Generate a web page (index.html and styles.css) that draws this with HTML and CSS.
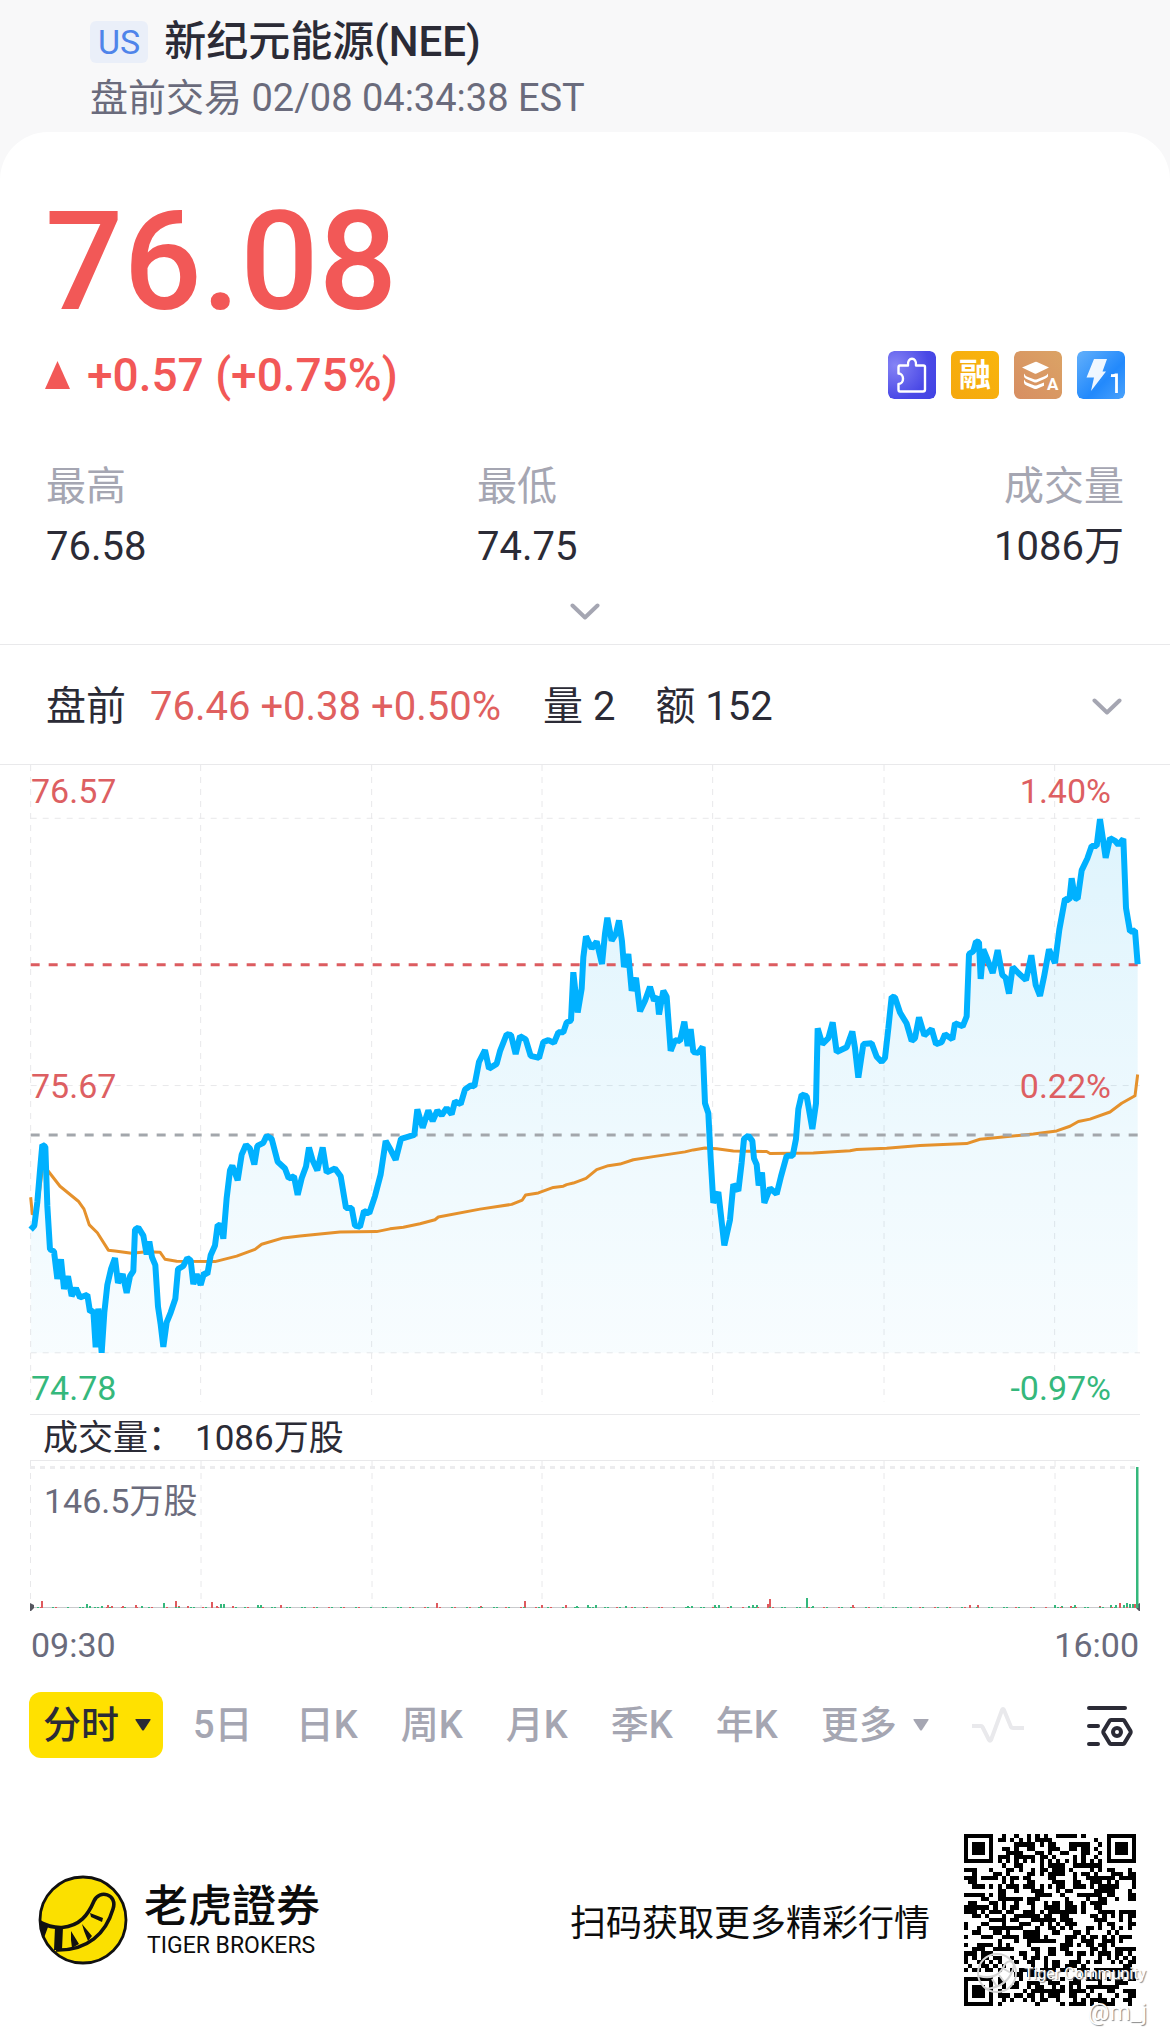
FILE: index.html
```html
<!DOCTYPE html>
<html lang="zh-CN">
<head>
<meta charset="utf-8">
<meta name="viewport" content="width=device-width, initial-scale=1">
<title>新纪元能源(NEE)</title>
<link rel="stylesheet" href="styles.css">
</head>
<body>
<header class="header">
  <div class="title-row">
    <span class="market">US</span>
    <h1 class="title">新纪元能源(NEE)</h1>
  </div>
  <p class="session">盘前交易 02/08 04:34:38 EST</p>
</header>

<main class="card">
  <section class="quote">
    <div class="price">76.08</div>
    <div class="change-row">
      <div class="change">
        <svg class="up" viewBox="0 0 25 28" aria-hidden="true"><path d="M12.500 0 25 28H0z"/></svg>
        <span>+0.57 (+0.75%)</span>
      </div>
      <div class="badges">
        <svg class="badge" viewBox="0 0 48 48" aria-hidden="true">
          <defs><radialGradient id="g1" cx=".15" cy=".3" r="1"><stop offset="0" stop-color="#8583f5"/><stop offset=".7" stop-color="#4a49e6"/><stop offset="1" stop-color="#4344e4"/></radialGradient></defs>
          <rect width="48" height="48" rx="6" fill="url(#g1)"/>
          <path d="M12 14.500h8c-1-9 9-9 8 0h7.500q1.500 0 1.500 1.500v22.500q0 2-2 2H12q-1.500 0-1.500-2v-5.500c6 0 6-10.500 0-10.500v-6q0-2 1.500-2z" fill="none" stroke="#fff" stroke-width="2.400" stroke-linejoin="round"/>
        </svg>
        <span class="badge badge-margin">融</span>
        <svg class="badge" viewBox="0 0 48 48" aria-hidden="true">
          <defs><linearGradient id="g3" x1="0" y1="1" x2="1" y2="0"><stop offset="0" stop-color="#d78e62"/><stop offset="1" stop-color="#dba365"/></linearGradient></defs>
          <rect width="48" height="48" rx="6" fill="url(#g3)"/>
          <path d="M8 16.500 21 11q1-.4 2 0l12 5.500-12.500 6q-1 .4-2 0z" fill="#fff"/>
          <path d="M10 22.500q1 2.500 4 3.500l6 2.300q1.500.5 3 0l7-2.800q3-1 4-3v3q-1 1.500-3 2.300l-8 3.400q-1.500.6-3 0l-7-3q-3-1.200-3-3zM10 28.500q1 2.500 4 3.500l6 2.300q1.500.5 3 0l7-2.800v3.300l-7 3q-1.500.6-3 0l-7-3q-3-1.200-3-3z" fill="#fff"/>
          <text x="33" y="39" class="badge-letter">A</text>
        </svg>
        <svg class="badge" viewBox="0 0 48 48" aria-hidden="true">
          <defs><linearGradient id="g4" x1="0" y1="0" x2="1" y2="1"><stop offset="0" stop-color="#63b0fb"/><stop offset=".6" stop-color="#2289fc"/><stop offset="1" stop-color="#4ba2fb"/></linearGradient></defs>
          <rect width="48" height="48" rx="6" fill="url(#g4)"/>
          <path d="M17 8h13l-4.500 12.500H29L14 40l3-13.500H9.500z" fill="#fff" fill-opacity=".92"/>
          <path d="M34 24.500q3 .5 4.500-.5h1v18" fill="none" stroke="#fff" stroke-width="2.800"/>
        </svg>
      </div>
    </div>
  </section>

  <dl class="stats">
    <div class="stat"><dt>最高</dt><dd>76.58</dd></div>
    <div class="stat"><dt>最低</dt><dd>74.75</dd></div>
    <div class="stat stat-end"><dt>成交量</dt><dd>1086万</dd></div>
  </dl>
  <button class="expand" type="button" aria-label="展开">
    <svg class="chevron" viewBox="0 0 30 18" aria-hidden="true"><path d="M2.500 2.500 15 14.500 27.500 2.500"/></svg>
  </button>

  <section class="premarket">
    <span>盘前</span>
    <span class="premarket-price">76.46 +0.38 +0.50%</span>
    <span class="premarket-volume">量 2</span>
    <span>额 152</span>
    <button class="more" type="button" aria-label="展开盘前">
      <svg class="chevron" viewBox="0 0 30 18" aria-hidden="true"><path d="M2.500 2.500 15 14.500 27.500 2.500"/></svg>
    </button>
  </section>

  <section class="price-chart">
    <svg class="plot" viewBox="0 13 3510 1644" preserveAspectRatio="none" aria-hidden="true">
      <defs><linearGradient id="area" gradientUnits="userSpaceOnUse" x1="0" y1="150" x2="0" y2="1502"><stop offset="0" stop-color="#00a8ee" stop-opacity=".13"/><stop offset=".45" stop-color="#00a8ee" stop-opacity=".08"/><stop offset="1" stop-color="#00a8ee" stop-opacity=".03"/></linearGradient></defs>
      <path class="grid" d="M92 13V1625M602 13V1625M1115 13V1625M1626 13V1625M2138 13V1625M2652 13V1625M3164 13V1625"/>
      <path class="grid" d="M92 148H3420M92 825H3420M92 1502H3420"/>
      <path id="fill" fill="url(#area)" d=""/>
      <path class="average" d="M92 1108 97 1150 110 1150 128 1030 145 1042 180 1080 235 1118 252 1138 268 1178 292 1198 325 1242 345 1244 395 1250 440 1246 480 1247 495 1265 530 1270 645 1271 710 1257 765 1240 785 1227 850 1211 900 1206 1020 1196 1130 1195 1170 1188 1210 1184 1260 1175 1305 1165 1315 1158 1440 1138 1535 1126 1567 1115 1577 1102 1615 1097 1660 1083 1690 1080 1700 1076 1720 1072 1758 1060 1790 1038 1825 1028 1860 1024 1900 1013 1960 1005 2055 993 2080 988 2115 983 2150 985 2200 991 2300 992 2310 997 2440 996 2550 990 2570 987 2660 984 2760 977 2900 972 2940 961 3100 948 3170 940 3210 928 3235 916 3270 910 3330 892 3365 870 3405 851 3413 797"/>
      <path class="reference-close" d="M92 950H3413"/>
      <path class="reference-last" d="M92 519H3413"/>
      <path id="line" class="line" d="M92 1190 103 1180 112 1120 120 1040 127 975 136 980 142 1130 150 1240 162 1245 172 1315 183 1265 192 1340 204 1308 215 1358 228 1338 240 1362 262 1355 270 1398 280 1395 287 1488 295 1390 305 1502 313 1400 322 1330 333 1290 345 1262 354 1325 368 1303 380 1350 390 1308 400 1295 405 1190 415 1185 430 1205 440 1253 448 1220 456 1260 466 1280 474 1385 482 1430 490 1487 500 1425 512 1400 526 1365 534 1290 550 1282 562 1262 572 1268 580 1328 590 1303 602 1330 612 1300 622 1303 632 1255 645 1230 653 1178 663 1180 670 1213 680 1110 690 1040 697 1028 713 1065 725 1000 738 975 750 985 763 1025 772 978 790 970 800 952 815 960 833 1018 855 1035 866 1060 882 1055 893 1102 905 1060 918 1030 927 982 938 1015 952 1040 968 982 980 1045 1005 1035 1022 1055 1038 1135 1055 1135 1065 1180 1080 1183 1092 1143 1108 1148 1125 1105 1142 1050 1157 965 1170 985 1187 1013 1203 960 1243 950 1252 885 1268 932 1285 888 1298 915 1312 888 1325 900 1340 882 1355 898 1365 865 1382 872 1395 835 1412 825 1423 827 1437 765 1455 735 1467 782 1490 770 1500 738 1520 695 1533 697 1547 745 1560 700 1577 708 1592 750 1617 755 1630 715 1645 710 1662 717 1675 690 1690 690 1700 665 1713 660 1720 538 1733 640 1745 580 1750 500 1758 447 1775 478 1790 460 1806 517 1815 440 1822 400 1835 458 1848 440 1857 407 1866 460 1872 525 1885 492 1895 585 1908 552 1920 637 1935 610 1950 575 1962 610 1972 600 1977 645 1990 585 2000 600 2012 737 2025 710 2040 712 2053 663 2063 725 2072 682 2080 740 2095 742 2108 727 2115 870 2125 895 2132 1010 2140 1122 2155 1095 2173 1230 2190 1165 2200 1075 2215 1092 2225 1020 2232 960 2245 952 2257 965 2262 1010 2270 1025 2276 1078 2286 1045 2293 1122 2310 1085 2330 1100 2343 1055 2360 1003 2378 1003 2388 960 2395 885 2405 848 2420 852 2437 935 2448 870 2453 680 2467 720 2485 705 2498 665 2510 740 2540 728 2557 688 2565 730 2575 805 2590 720 2615 718 2630 752 2645 765 2655 755 2665 680 2675 600 2685 602 2700 640 2720 668 2735 712 2745 705 2757 652 2773 698 2795 682 2808 720 2825 715 2835 695 2857 708 2865 667 2888 675 2900 650 2907 492 2920 485 2928 460 2937 462 2942 555 2950 480 2962 505 2978 540 2993 482 3007 545 3017 552 3027 592 3038 525 3055 540 3078 558 3094 495 3107 570 3120 598 3132 550 3147 480 3165 515 3178 430 3195 352 3208 355 3215 300 3225 350 3233 352 3245 280 3262 250 3275 218 3290 218 3300 150 3307 190 3317 248 3330 198 3345 205 3355 215 3370 200 3378 375 3390 435 3405 432 3413 518"/>
    </svg>
    <div class="axis axis-top"><span>76.57</span><span>1.40%</span></div>
    <div class="axis axis-middle"><span>75.67</span><span>0.22%</span></div>
    <div class="axis axis-bottom"><span>74.78</span><span>-0.97%</span></div>
  </section>

  <section class="volume">
    <h2 class="volume-title"><span>成交量：</span><span>1086万股</span></h2>
    <div class="volume-chart">
      <svg class="plot" viewBox="0 0 1170 150" preserveAspectRatio="none" aria-hidden="true">
        <path class="grid" d="M30.500 0V146M201 0V146M372 0V146M542 0V146M713 0V146M884 0V146M1055 0V146"/>
        <path class="ceiling" d="M30 6.500H1140"/>
        <path class="base" d="M30 146.500H1140"/>
        <g id="bars"></g>
        <path d="M30 142l4 2v3l-4 4zM1140 142l-4 2v3l4 4z" fill="#55565f"/>
        <path class="bar-down" d="M1136 6h2.500v141H1136z"/>
      </svg>
      <span class="volume-max">146.5万股</span>
    </div>
    <div class="times"><span>09:30</span><span>16:00</span></div>
  </section>

  <nav class="tabs">
    <button class="tab tab-active" type="button">分时 <svg class="caret" viewBox="0 0 16 12" aria-hidden="true"><path d="M1 0h14q1 0 .5 1L9 11q-1 1-2 0L.5 1Q0 0 1 0z"/></svg></button>
    <button class="tab" type="button">5日</button>
    <button class="tab" type="button">日K</button>
    <button class="tab" type="button">周K</button>
    <button class="tab" type="button">月K</button>
    <button class="tab" type="button">季K</button>
    <button class="tab" type="button">年K</button>
    <button class="tab" type="button">更多 <svg class="caret" viewBox="0 0 16 12" aria-hidden="true"><path d="M1 0h14q1 0 .5 1L9 11q-1 1-2 0L.5 1Q0 0 1 0z"/></svg></button>
    <button class="tab pulse" type="button" aria-label="走势"><svg viewBox="0 0 52 36" aria-hidden="true"><path d="M0 19h9q1 0 1.500 1l6.500 13q1 1.500 2 0L30 3q1-2 2 0l7 17q.5 1 2 1h11"/></svg></button>
    <button class="tab settings" type="button" aria-label="设置"><svg viewBox="0 0 48 44" aria-hidden="true"><path d="M3 5h36M3 23h9M3 41h9"/><path d="M25 17h12q1 0 1.500 1l6 10q.5 1 0 2l-6 10q-.5 1-1.500 1H25q-1 0-1.500-1l-6-10q-.5-1 0-2l6-10q.5-1 1.500-1z"/><circle cx="31" cy="29" r="4"/></svg></button>
  </nav>
</main>

<footer class="footer">
  <svg class="logo" viewBox="0 0 90 90" aria-hidden="true">
    <defs><clipPath id="disc"><circle cx="45" cy="45" r="43"/></clipPath></defs>
    <circle cx="45" cy="45" r="43.500" fill="#fbe000"/>
    <g clip-path="url(#disc)" fill="none" stroke="#111" stroke-linejoin="round">
      <path d="M0 46Q12 53 24 52.500C42 51 50 40 56 26C61 14 80 19 75 34C68 58 50 76 18 75" stroke-width="3.600"/>
      <path d="M0 47l10 5-4 11zM17 52l8 0-1 23h-8zM33 56l8 13-7 4-1-8zM44 49l10 12-4 5-4-10zM52 38l13 5-1 4-11-5z" fill="#111" stroke="none"/>
    </g>
    <circle cx="45" cy="45" r="43" fill="none" stroke="#111" stroke-width="2.800"/>
  </svg>
  <div class="brand">
    <span class="brand-name">老虎證券</span>
    <span class="brand-latin">TIGER BROKERS</span>
  </div>
  <p class="scan">扫码获取更多精彩行情</p>
  <div class="qr">
    <svg viewBox="0 0 41 41" shape-rendering="crispEdges" role="img" aria-label="二维码"><path id="modules" d=""/></svg>
    <div class="watermark">
      <svg class="watermark-logo" viewBox="0 0 42 42" aria-hidden="true"><circle cx="21" cy="21" r="19"/><path d="M3 24q19 5 26-12 6-6 9 1-4 22-29 24M16 27l5 8M23 23l6 8M28 17l7 4"/></svg>
      <span>Tiger Community</span>
    </div>
    <span class="author">@m_j</span>
  </div>
</footer>
<script src="app.js"></script>
</body>
</html>
```
FILE: styles.css
```css
* { box-sizing: border-box; }
body {
  margin: 0;
  background: #f8f8f9;
  color: #2b2b36;
  font-family: Roboto, "Noto Sans CJK SC", sans-serif;
  font-size: 40px;
}
h1, h2, p, dl, dd { margin: 0; font-weight: 400; }
button { padding: 0; border: 0; background: none; color: inherit; font: inherit; }
svg { display: block; }

.header { padding: 14px 90px 8px; }
.title-row { display: flex; align-items: center; gap: 16px; height: 56px; }
.market {
  padding: 0 8px;
  border-radius: 6px;
  background: #eaeff9;
  color: #4f84ea;
  font-size: 34px;
  line-height: 42px;
}
.title { font-size: 42px; font-weight: 500; line-height: 56px; }
.session { padding-top: 2px; color: #6a6b7c; font-size: 38px; line-height: 52px; }

.card { padding-top: 50px; border-radius: 48px 48px 0 0; background: #fff; }
.quote { padding: 0 45px; color: #f25857; font-weight: 500; }
.price { font-size: 138px; line-height: 160px; }
.change-row { display: flex; align-items: center; justify-content: space-between; height: 66px; }
.change { display: flex; align-items: center; gap: 17px; font-size: 46px; line-height: 66px; }
.up { width: 25px; height: 28px; fill: #f25857; }
.badges { display: flex; gap: 15px; }
.badge { width: 48px; height: 48px; border-radius: 6px; }
.badge-margin {
  background: linear-gradient(45deg, #f5a80f, #f9b50c);
  color: #fff;
  font-size: 32px;
  font-weight: 700;
  line-height: 48px;
  text-align: center;
}
.badge-letter { fill: #fff; font-size: 17px; font-weight: 700; }

.stats { display: grid; grid-template-columns: 431px 1fr 1fr; margin-top: 49px; padding: 0 46px; line-height: 60px; }
.stat dt { color: #a5a6b2; }
.stat-end { text-align: right; }
.expand { display: grid; place-items: center; width: 100%; height: 68px; padding-top: 2px; border-bottom: 1px solid #e9e9eb; }
.chevron { width: 30px; height: 18px; fill: none; stroke: #a5a6b2; stroke-width: 4; stroke-linecap: round; stroke-linejoin: round; }

.premarket { display: flex; align-items: center; height: 120px; padding: 4px 48px 0 46px; border-bottom: 1px solid #e9e9eb; line-height: 48px; }
.premarket-price { margin: 0 42px 0 24px; color: #e0605f; }
.premarket-volume { margin-right: 40px; }
.more { margin-left: auto; }

.price-chart { position: relative; height: 649px; }
.plot { width: 100%; height: 100%; }
.plot path { vector-effect: non-scaling-stroke; }
.grid { fill: none; stroke: #e8e8ea; stroke-width: 1; stroke-dasharray: 6 6; }
.line { fill: none; stroke: #00b1ff; stroke-width: 6; stroke-linejoin: bevel; }
.average { fill: none; stroke: #e5912c; stroke-width: 3; stroke-linejoin: round; }
.reference-last { stroke: #dc5c60; stroke-width: 3; stroke-dasharray: 9 9; }
.reference-close { stroke: #a3a7ac; stroke-width: 3; stroke-dasharray: 9 9; }
.axis {
  position: absolute;
  left: 31px;
  right: 59px;
  display: flex;
  justify-content: space-between;
  color: #dd5f62;
  font-size: 34px;
  line-height: 40px;
}
.axis-top { top: 6px; }
.axis-middle { top: 301px; }
.axis-bottom { bottom: 6px; color: #35b87c; }

.volume-title {
  display: flex;
  gap: 12px;
  margin: 0 30px;
  padding: 2px 0 0 13px;
  border: solid #e9e9eb;
  border-width: 1px 0;
  font-size: 35px;
  line-height: 43px;
}
.volume-chart { position: relative; height: 150px; }
.volume-max { position: absolute; top: 16px; left: 44px; color: #6a6b7c; font-size: 34px; line-height: 48px; }
.ceiling { stroke: #ececee; stroke-width: 3; stroke-dasharray: 5 5; }
.base { stroke: #c9cacd; stroke-width: 1; }
.bar-up { fill: #df5a5e; }
.bar-down { fill: #35b87c; }
.times { display: flex; justify-content: space-between; padding: 0 31px; color: #6a6b7c; font-size: 34px; line-height: 68px; }

.tabs { display: flex; align-items: center; gap: 43px; margin-top: 13px; padding: 0 36px 0 29px; color: #a5a6b2; line-height: 44px; }
.tab { flex: none; display: flex; align-items: center; gap: 16px; height: 66px; font-size: 38px; line-height: 44px; font-weight: 500; white-space: nowrap; }
.tab-active { margin-right: -13px; padding: 0 12px 0 14px; border-radius: 12px; background: #ffe100; color: #2b2b36; }
.caret { width: 16px; height: 12px; fill: currentColor; }
.pulse svg { width: 52px; height: 36px; fill: none; stroke: #e9e9ec; stroke-width: 4; }
.settings { margin-left: auto; }
.settings svg { width: 48px; height: 44px; fill: none; stroke: #2b2b36; stroke-width: 4; stroke-linecap: round; }

.footer { display: flex; align-items: center; padding: 76px 34px 34px 38px; background: #fff; color: #0c0c0c; }
.logo { width: 90px; height: 90px; }
.brand { display: flex; flex-direction: column; margin-left: 16px; padding-top: 4px; }
.brand-name { font-family: Roboto, "Noto Sans CJK TC", sans-serif; font-size: 44px; font-weight: 500; line-height: 48px; }
.brand-latin { padding-left: 3px; font-size: 23px; line-height: 30px; }
.scan { margin-left: auto; font-size: 36px; }
.qr { position: relative; width: 172px; height: 172px; margin-left: 34px; }
.watermark { position: absolute; top: 118px; right: -10px; display: flex; align-items: center; gap: 6px; color: #fff; font-size: 16px; text-shadow: 1px 1px 1px #888; white-space: nowrap; }
.watermark-logo { width: 42px; height: 42px; fill: none; stroke: #d4d4d4; stroke-width: 2; }
.author { position: absolute; top: 162px; right: -11px; color: #fff; font-size: 24px; line-height: 32px; text-shadow: 1px 1px 1px #888; }
```
FILE: app.js
```js
// Shaded area under the price line
const line = document.getElementById('line').getAttribute('d');
document.getElementById('fill').setAttribute('d', line + 'V1502H92Z');

// Volume bars: [x, height, rising]
const bars = [[41,7,1],[86,4,0],[89,2,0],[101,2,0],[107,3,1],[111,2,1],[122,2,1],[135,3,1],[141,2,0],[163,5,0],[175,7,1],[178,2,1],[187,2,1],[211,6,1],[216,2,1],[220,4,0],[223,4,0],[232,2,1],[257,3,0],[260,3,0],[280,3,1],[436,5,1],[480,2,1],[524,7,1],[541,3,1],[565,3,1],[576,2,0],[587,3,0],[595,3,0],[625,2,0],[687,2,0],[691,2,0],[714,3,0],[718,3,0],[730,2,0],[748,2,0],[752,3,0],[756,3,0],[767,4,1],[769,9,1],[806,10,0],[812,2,0],[852,3,1],[969,3,1],[977,3,1],[1054,3,0],[1061,2,0],[1070,2,1],[1074,3,0],[1099,2,1],[1110,3,0],[1115,3,0],[1119,5,1],[1123,3,0],[1126,5,0],[1129,4,0],[1132,4,0],[1134,4,1]];
for (let x = 34; x < 1134; x += 3) {
  const n = (x * 7919) % 101;
  if (n < 42) bars.push([x, 1, n % 3 === 0 ? 1 : 0]);
}
document.getElementById('bars').innerHTML = bars.map(([x, h, up]) =>
  `<rect class="${up ? 'bar-up' : 'bar-down'}" x="${x}" y="${147 - h}" width="2" height="${h}"/>`).join('');

// Code modules with finder, timing and alignment patterns
const size = 41;
let seed = 20230208;
const next = () => (seed = (seed * 1103515245 + 12345) % 2147483648) / 2147483648;
const finder = (x, y) => {
  for (const [fx, fy] of [[3, 3], [37, 3], [3, 37]]) {
    const d = Math.max(Math.abs(x - fx), Math.abs(y - fy));
    if (d <= 4) return d !== 2 && d !== 4;
  }
  const a = Math.max(Math.abs(x - 34), Math.abs(y - 34));
  if (a <= 2) return a !== 1;
  if (x === 6 || y === 6) return (x + y) % 2 === 0;
  return null;
};
let path = '';
for (let y = 0; y < size; y++) {
  for (let x = 0; x < size; x++) {
    const random = next() < 0.5;
    const fixed = finder(x, y);
    if (fixed === null ? random : fixed) path += `M${x} ${y}h1v1h-1z`;
  }
}
document.getElementById('modules').setAttribute('d', path);
```
